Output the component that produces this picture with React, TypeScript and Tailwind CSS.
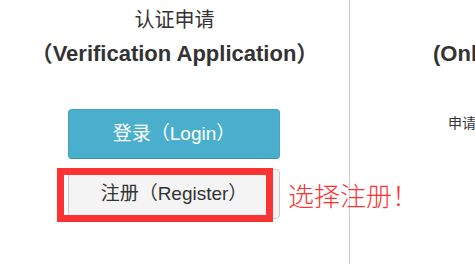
import * as React from "react";

const latin = "font-['Liberation_Sans','Noto_Sans_CJK_SC',sans-serif]";

export default function App() {
  return (
    <div className={`relative flex h-[264px] w-[475px] overflow-hidden bg-white text-[#333] ${latin}`}>
      {/* left column: verification */}
      <div className="w-[350px] shrink-0 border-r border-[#cccccc]">
        <h2 className="pt-[6px] text-center text-[20px] leading-[26px] font-normal font-['Noto_Sans_CJK_SC',serif]">
          认证申请
        </h2>
        <h3 className="mt-[9px] text-center text-[22px] leading-[26px] font-bold">
          （Verification Application）
        </h3>

        <div className="mt-[42px] flex flex-col gap-[10px] pl-[68px]">
          <button className="h-[50px] w-[212px] rounded-[4px] border border-[#44a3c0] border-b-[#3a92ad] bg-[#4aafcd] text-[19px] text-white">
            登录（Login）
          </button>
          <button className="h-[50px] w-[212px] rounded-[4px] border border-[#cccccc] bg-[#f4f4f4] text-[19px] text-[#333]">
            注册（Register）
          </button>
        </div>
      </div>

      {/* right column, cut off at the window edge */}
      <div className="flex-1 overflow-hidden">
        <h3 className="mt-[41px] pl-[83px] whitespace-nowrap text-[22px] leading-[26px] font-bold">
          (Online Application)
        </h3>
        <p className="mt-[46px] pl-[98px] whitespace-nowrap text-[14px] leading-[20px]">
          申请
        </p>
      </div>

      {/* annotation */}
      <div className="pointer-events-none absolute left-[57px] top-[168px] h-[54px] w-[216px] border-[7px] border-[#fd3333]" />
      <span className="pointer-events-none absolute left-[288px] top-[177px] whitespace-nowrap text-[26px] leading-[36px] font-light text-[#fd3333] font-['Noto_Sans_CJK_SC',sans-serif]">
        选择注册！
      </span>
    </div>
  );
}
